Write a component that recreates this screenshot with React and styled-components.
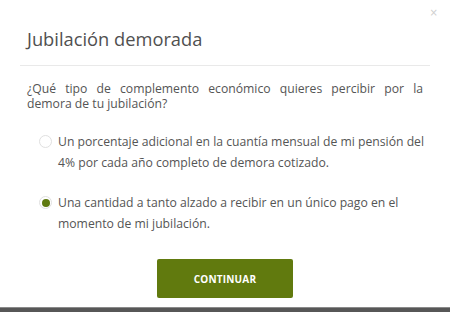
import React, { useState } from "react";
import styled, { createGlobalStyle } from "styled-components";

const GlobalStyle = createGlobalStyle`
  html, body { margin: 0; padding: 0; background: #fff; }
  body { font-family: "Open Sans", "Liberation Sans", sans-serif; }
  * { box-sizing: border-box; }
`;

const Screen = styled.div`
  width: 450px;
  height: 312px;
  display: flex;
  flex-direction: column;
  overflow: hidden;
`;

const Modal = styled.div`
  position: relative;
  height: 307px;
  background: #fff;
`;

const Backdrop = styled.div`
  flex: 1;
  background: #575757;
  border-top: 1px solid #8a8a8a;
`;

const Close = styled.button`
  position: absolute;
  top: 6px;
  right: 12px;
  border: 0;
  background: none;
  padding: 0;
  font-family: "DejaVu Sans", sans-serif;
  font-size: 10px;
  line-height: 14px;
  color: #cfcfcf;
  cursor: pointer;
`;

const Header = styled.div`
  padding: 26px 27px 0;
`;

const Title = styled.h2`
  margin: 0;
  font-size: 18.3px;
  line-height: 26px;
  font-weight: 400;
  color: #505050;
`;

const Divider = styled.hr`
  margin: 13px 20px 0;
  border: 0;
  border-top: 1px solid #e9e9e9;
  height: 0;
`;

const Body = styled.div`
  padding: 0 27px;
`;

const Question = styled.p`
  margin: 15px 0 0;
  font-size: 12.2px;
  line-height: 15px;
  color: #555;
  text-align: justify;
`;

const Options = styled.div`
  margin: 20px -8px 0 0;
  padding-left: 12px;
  display: flex;
  flex-direction: column;
  gap: 19px;
`;

const Option = styled.label`
  display: flex;
  align-items: flex-start;
  gap: 6px;
  cursor: pointer;
`;

const Radio = styled.span`
  flex: none;
  width: 13px;
  height: 13px;
  margin-top: 4px;
  border-radius: 50%;
  border: 1px solid #e0e0e0;
  background: #fff;
  display: flex;
  align-items: center;
  justify-content: center;

  &::after {
    content: "";
    width: 8px;
    height: 8px;
    border-radius: 50%;
    background: ${(p) => (p.$checked ? "#5f7a10" : "transparent")};
  }
`;

const OptionText = styled.span`
  font-size: 12.2px;
  line-height: 21px;
  color: #555;
`;

const Footer = styled.div`
  margin-top: 25px;
  display: flex;
  justify-content: center;
`;

const Button = styled.button`
  width: 136px;
  height: 39px;
  border: 0;
  border-radius: 2px;
  background: #617a0e;
  color: #fff;
  font-family: "Open Sans", "Liberation Sans", sans-serif;
  font-size: 10px;
  font-weight: 700;
  letter-spacing: 0.2px;
  cursor: pointer;
`;

const question =
  "¿Qué tipo de complemento económico quieres percibir por la demora\u00a0de\u00a0tu\u00a0jubilación?";

const options = [
  "Un porcentaje adicional en la cuantía mensual de mi pensión del 4% por cada año completo de demora cotizado.",
  "Una cantidad a tanto alzado a recibir en un único pago en el momento de mi jubilación.",
];

export default function App() {
  const [selected, setSelected] = useState(1);

  return (
    <Screen>
      <GlobalStyle />
      <Modal>
        <Close aria-label="Cerrar">×</Close>
        <Header>
          <Title>Jubilación demorada</Title>
        </Header>
        <Divider />
        <Body>
          <Question>{question}</Question>
          <Options>
            {options.map((text, i) => (
              <Option key={i} onClick={() => setSelected(i)}>
                <Radio $checked={selected === i} />
                <OptionText>{text}</OptionText>
              </Option>
            ))}
          </Options>
          <Footer>
            <Button>CONTINUAR</Button>
          </Footer>
        </Body>
      </Modal>
      <Backdrop />
    </Screen>
  );
}
